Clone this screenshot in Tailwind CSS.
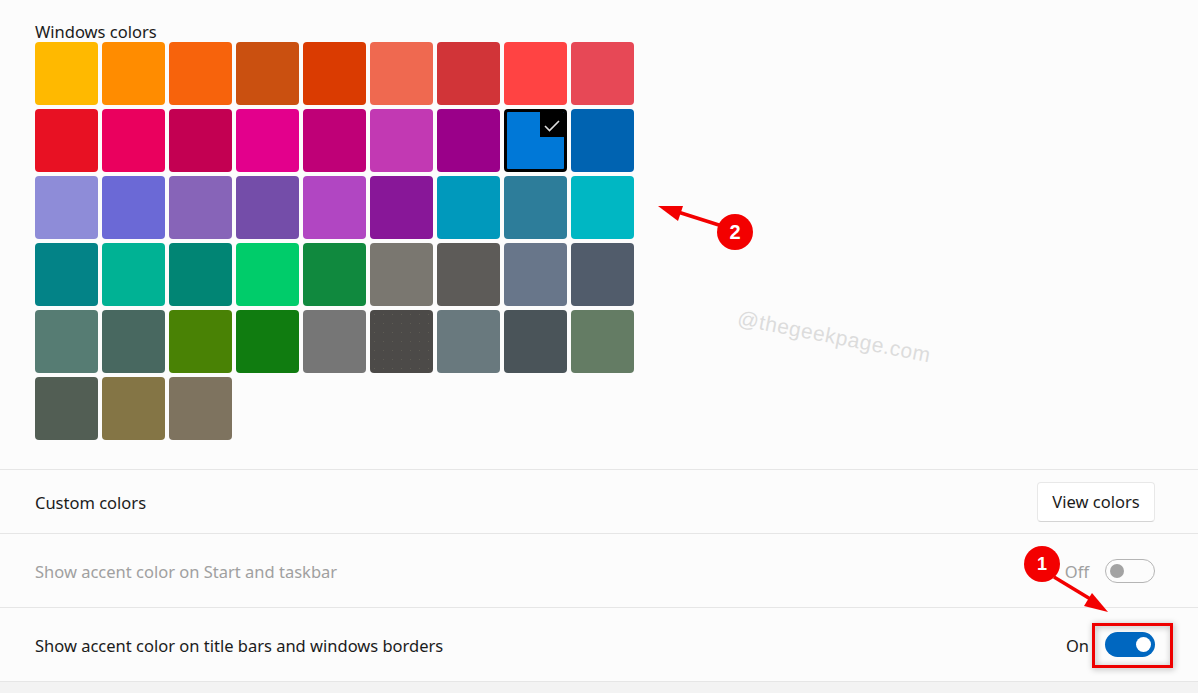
<!doctype html>
<html><head><meta charset="utf-8"><script src="https://cdn.jsdelivr.net/npm/@tailwindcss/browser@4"></script></head>
<body class="m-0 bg-[#fcfcfc]">
<div class="relative w-[1198px] h-[693px] overflow-hidden bg-[#fcfcfc] text-[#1b1b1b] font-['Noto_Sans','Open_Sans',sans-serif] text-[16.5px]">
  <section class="h-[470px] border-b border-[#e6e6e6] pl-[35px] pt-[22px]">
    <div class="h-5 leading-5 mb-0">Windows colors</div>
    <div class="grid grid-cols-[repeat(9,63px)] auto-rows-[63px] gap-1 w-max">
      <div class="rounded bg-[#ffb900]"></div><div class="rounded bg-[#ff8c00]"></div><div class="rounded bg-[#f7630c]"></div><div class="rounded bg-[#ca5010]"></div><div class="rounded bg-[#da3b01]"></div><div class="rounded bg-[#ef6950]"></div><div class="rounded bg-[#d13438]"></div><div class="rounded bg-[#ff4343]"></div><div class="rounded bg-[#e74856]"></div>
      <div class="rounded bg-[#e81123]"></div><div class="rounded bg-[#ea005e]"></div><div class="rounded bg-[#c30052]"></div><div class="rounded bg-[#e3008c]"></div><div class="rounded bg-[#bf0077]"></div><div class="rounded bg-[#c239b3]"></div><div class="rounded bg-[#9a0089]"></div>
      <div class="relative rounded border-[3px] border-black bg-[#0078d7] overflow-hidden">
        <div class="absolute top-0 right-0 w-6 h-[25px] bg-black flex items-center justify-center">
          <svg width="18" height="18" viewBox="0 0 18 18" fill="none" stroke="#dedede" stroke-width="1.6"><path d="M2 10 L6.5 14.5 L16 5"/></svg>
        </div>
      </div>
      <div class="rounded bg-[#0063b1]"></div>
      <div class="rounded bg-[#8e8cd8]"></div><div class="rounded bg-[#6b69d6]"></div><div class="rounded bg-[#8764b8]"></div><div class="rounded bg-[#744da9]"></div><div class="rounded bg-[#b146c2]"></div><div class="rounded bg-[#881798]"></div><div class="rounded bg-[#0099bc]"></div><div class="rounded bg-[#2d7d9a]"></div><div class="rounded bg-[#00b7c3]"></div>
      <div class="rounded bg-[#038387]"></div><div class="rounded bg-[#00b294]"></div><div class="rounded bg-[#018574]"></div><div class="rounded bg-[#00cc6a]"></div><div class="rounded bg-[#10893e]"></div><div class="rounded bg-[#7a7770]"></div><div class="rounded bg-[#5d5b58]"></div><div class="rounded bg-[#68768a]"></div><div class="rounded bg-[#515c6b]"></div>
      <div class="rounded bg-[#567c73]"></div><div class="rounded bg-[#486860]"></div><div class="rounded bg-[#498205]"></div><div class="rounded bg-[#107c10]"></div><div class="rounded bg-[#767676]"></div><div class="rounded bg-[#4c4a48] bg-[radial-gradient(circle,#5e5c54_0.7px,transparent_1px)] bg-[length:9px_9px]"></div><div class="rounded bg-[#69797e]"></div><div class="rounded bg-[#4a5459]"></div><div class="rounded bg-[#647c64]"></div>
      <div class="rounded bg-[#525e54]"></div><div class="rounded bg-[#847545]"></div><div class="rounded bg-[#7e735f]"></div>
    </div>
  </section>
  <div class="h-[64px] border-b border-[#e6e6e6] pl-[35px] pr-[43px] flex items-center justify-between">
    <span class="pt-1">Custom colors</span>
    <span class="h-[40px] w-[118px] flex items-center justify-center rounded border border-[#e8e8e8] border-b-[#d4d4d4] bg-white pt-[2px]">View colors</span>
  </div>
  <div class="h-[74px] border-b border-[#e6e6e6] pl-[35px] pr-[43px] flex items-center justify-between text-[#a0a0a0]">
    <span class="pt-1">Show accent color on Start and taskbar</span>
    <div class="flex items-center gap-[16px]">
      <span class="pt-1">Off</span>
      <span class="w-[50px] h-[24px] rounded-full border border-[#b5b5b5] flex items-center pl-[4px]"><span class="w-[14px] h-[14px] rounded-full bg-[#a3a3a3]"></span></span>
    </div>
  </div>
  <div class="h-[74px] border-b border-[#e6e6e6] pl-[35px] pr-[43px] flex items-center justify-between">
    <span class="pt-1">Show accent color on title bars and windows borders</span>
    <div class="flex items-center gap-[16px]">
      <span class="pt-1">On</span>
      <span class="w-[50px] h-[25px] rounded-full bg-[#0067c0] flex items-center justify-end pr-[4px]"><span class="w-[15px] h-[15px] rounded-full bg-white"></span></span>
    </div>
  </div>
  <div class="h-[11px] bg-[#f3f3f3]"></div>

  <span class="absolute left-[738px] top-[307px] origin-left rotate-[11deg] text-[21px] leading-none tracking-[0.5px] text-[#dcdcdc] font-['Liberation_Sans',sans-serif]">@thegeekpage.com</span>

  <svg class="absolute inset-0" width="1198" height="693" viewBox="0 0 1198 693" fill="none">
    <path d="M722 226 L678 212" stroke="#f30000" stroke-width="3.5"/>
    <path d="M658 206 L683 206 L678 221 Z" fill="#f30000"/>
    <circle cx="735" cy="232" r="18" fill="#f30000"/>
    <path d="M1054 577 L1092 600" stroke="#f30000" stroke-width="3.5"/>
    <path d="M1108 612 L1084 606 L1092 593 Z" fill="#f30000"/>
    <circle cx="1042" cy="564" r="18" fill="#f30000"/>
    <rect x="1093.5" y="624.5" width="78" height="42" stroke="#ee0000" stroke-width="3" style="filter:drop-shadow(1px 1px 3px rgba(0,0,0,.35))"/>
  </svg>
  <span class="absolute left-[725px] top-[220px] w-5 text-center text-[20px] leading-6 font-bold text-white font-['Liberation_Sans',sans-serif]">2</span>
  <span class="absolute left-[1032px] top-[552px] w-5 text-center text-[18px] leading-6 font-bold text-white font-['Liberation_Sans',sans-serif]">1</span>
</div>
</body></html>
